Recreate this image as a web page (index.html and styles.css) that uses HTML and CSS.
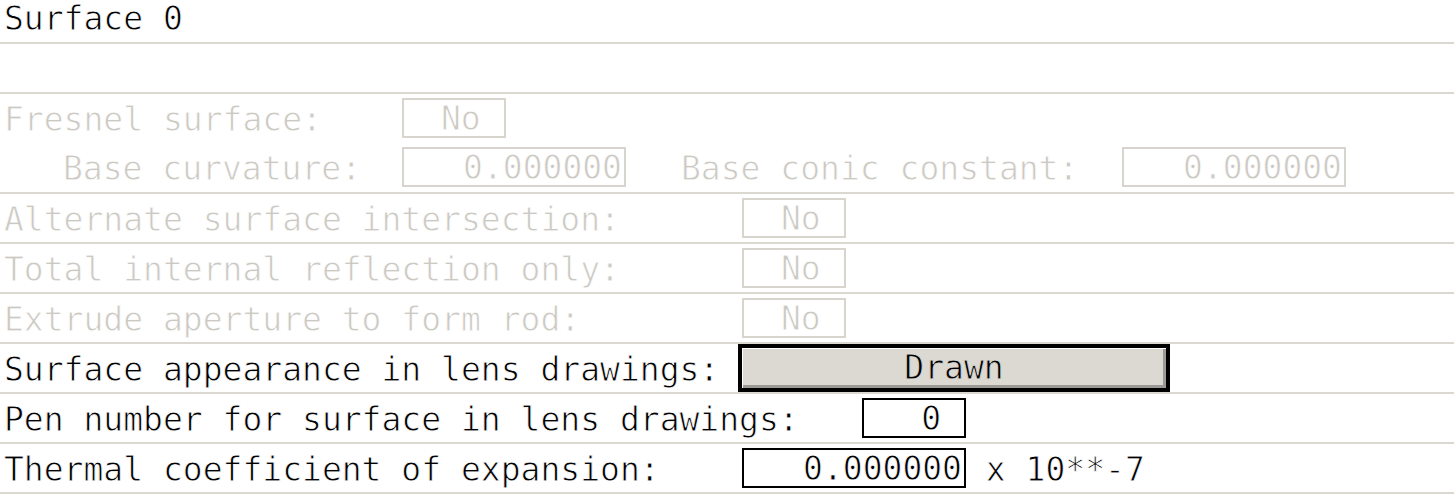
FILE: index.html
```html
<!DOCTYPE html>
<html>
<head>
<meta charset="utf-8">
<link rel="stylesheet" href="styles.css">
</head>
<body>
<div class="panel">
  <div class="row title"><span class="label">Surface 0</span></div>
  <div class="row"></div>
  <div class="row group disabled">
    <div class="sub">
      <span class="label w-fresnel">Fresnel surface:</span>
      <span class="field narrow center">No</span>
    </div>
    <div class="sub">
      <span class="label w-fresnel indent">Base curvature:</span>
      <span class="field wide">0.000000</span>
      <span class="label w-conic">Base conic constant:</span>
      <span class="field wide">0.000000</span>
    </div>
  </div>
  <div class="row disabled">
    <span class="label w-long">Alternate surface intersection:</span>
    <span class="field narrow center">No</span>
  </div>
  <div class="row disabled">
    <span class="label w-long">Total internal reflection only:</span>
    <span class="field narrow center">No</span>
  </div>
  <div class="row disabled">
    <span class="label w-long">Extrude aperture to form rod:</span>
    <span class="field narrow center">No</span>
  </div>
  <div class="row">
    <span class="label w-appear">Surface appearance in lens drawings:</span>
    <span class="button">Drawn</span>
  </div>
  <div class="row">
    <span class="label w-pen">Pen number for surface in lens drawings:</span>
    <span class="field narrow pen">0</span>
  </div>
  <div class="row">
    <span class="label w-long">Thermal coefficient of expansion:</span>
    <span class="field wide">0.000000</span>
    <span class="label">&nbsp;x 10**-7</span>
  </div>
</div>
</body>
</html>
```
FILE: styles.css
```css
html, body {
  margin: 0;
  padding: 0;
  background: #ffffff;
}

.panel {
  width: 1454px;
  font-family: "DejaVu Sans Mono", "Liberation Mono", monospace;
  font-size: 33px;
  color: #000000;
  -webkit-text-stroke: 0.8px #ffffff;
}

.row {
  display: flex;
  align-items: flex-start;
  height: 48px;
  border-bottom: 2px solid #dbd8d2;
  padding-left: 4px;
}

.row.title {
  height: 42px;
}

.row.title .label {
  padding-top: 0;
  line-height: 37px;
}

.row.group {
  height: 98px;
  flex-direction: column;
}

.sub {
  display: flex;
  align-items: flex-start;
  height: 49px;
}

.label {
  display: block;
  flex: none;
  white-space: pre;
  padding-top: 3px;
  line-height: 45px;
}

.indent {
  padding-left: 59px;
  box-sizing: border-box;
}

.w-fresnel { width: 398px; }
.w-conic { width: 441px; margin-left: 55px; }
.w-long { width: 738px; }
.w-appear { width: 734px; }
.w-pen { width: 858px; }

.field {
  display: block;
  flex: none;
  box-sizing: border-box;
  height: 40px;
  margin-top: 4px;
  border: 2px solid #000000;
  padding: 2px 2px 0 0;
  line-height: 34px;
  text-align: right;
  white-space: pre;
}

.field.narrow { width: 104px; }
.field.wide { width: 224px; }

.field.center {
  text-align: left;
  padding-left: 37px;
}

.field.pen {
  padding-right: 23px;
}

.disabled {
  color: #ccc9c3;
}

.disabled .field {
  border-color: #d8d5cf;
}

.button {
  display: block;
  flex: none;
  box-sizing: border-box;
  width: 432px;
  height: 48px;
  border: 4px solid #000000;
  background: #dcd9d3;
  box-shadow: inset 1px 1px 0 #ffffff, inset -3px -3px 0 #9c9a96;
  text-align: center;
  padding-top: 1px;
  line-height: 38px;
  -webkit-text-stroke: 0.8px #dcd9d3;
}
```
